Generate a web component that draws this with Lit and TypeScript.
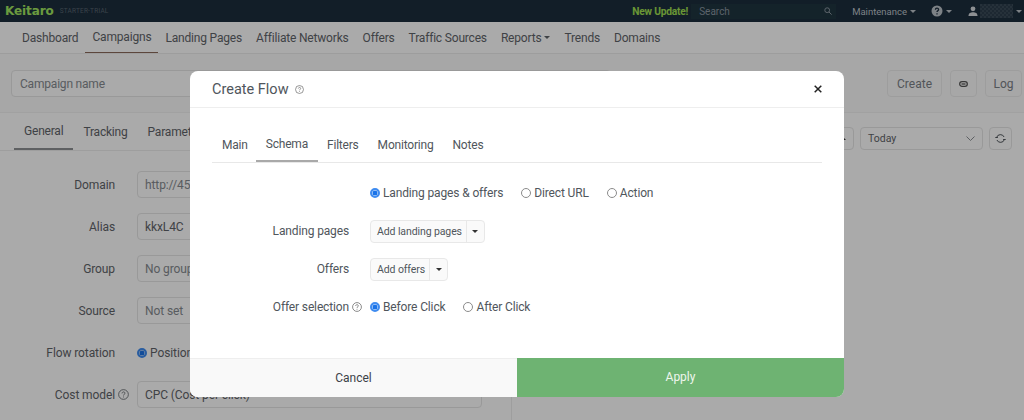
import { LitElement, html, css, svg } from "lit";
import { customElement } from "lit/decorators.js";

const helpIcon = (size = 10) => html`<svg class="help" width=${size} height=${size} viewBox="0 0 12 12" fill="none" stroke="currentColor">
  <circle cx="6" cy="6" r="5.3" stroke-width="0.9"></circle>
  <path d="M4.4 4.8c0-2.1 3.2-2.1 3.2-.2 0 1.2-1.6 1.2-1.6 2.5" stroke-width="0.9"></path>
  <path d="M6 8.2v1" stroke-width="0.9"></path>
</svg>`;

const caret = svg`<path d="M0 0h6L3 3z" fill="currentColor"></path>`;

@customElement("app-root")
export class AppRoot extends LitElement {
  static styles = css`
    :host {
      display: block;
      position: relative;
      width: 1024px;
      height: 420px;
      overflow: hidden;
      background: #fff;
      font-family: Roboto, "Liberation Sans", sans-serif;
      font-size: 12px;
      color: #5f6469;
    }
    .topbar {
      height: 22px;
      background: #1c2d3d;
      display: flex;
      align-items: center;
      padding: 0 2px 0 5px;
      color: #bcc3c9;
      font-size: 9.5px;
    }
    .logo {
      font-family: "DejaVu Sans", sans-serif;
      font-weight: 700;
      font-size: 12px;
      letter-spacing: -0.1px;
      color: #a1e75f;
    }
    .plan {
      margin-left: 6px;
      font-size: 6.5px;
      letter-spacing: 0.2px;
      color: #58656f;
    }
    .spacer {
      flex: 1;
    }
    .update {
      font-weight: 700;
      font-size: 10.2px;
      color: #a0e050;
      letter-spacing: -0.2px;
    }
    .search {
      width: 145px;
      height: 15px;
      margin-left: 3px;
      background: #1f3540;
      display: flex;
      align-items: center;
      justify-content: space-between;
      padding: 0 4px 0 8px;
      box-sizing: border-box;
      color: #8a96a0;
      font-size: 10px;
    }
    .menu {
      display: flex;
      align-items: center;
      gap: 3px;
    }
    .menu.maintenance {
      margin-left: 16px;
    }
    .menu.question {
      margin-left: 15px;
    }
    .menu.user {
      margin-left: 16px;
    }
    .blurred {
      width: 33px;
      height: 14px;
      margin-left: 2px;
      background: repeating-conic-gradient(#2c3d4c 0 25%, #3a4a58 0 50%) 0 0 / 4px 4px;
    }
    .last-caret {
      margin-left: 3px;
    }
    .nav {
      height: 31px;
      display: flex;
      padding-left: 15px;
      border-bottom: 1px solid #ececec;
      font-size: 12px;
      letter-spacing: -0.18px;
    }
    .nav a,
    .page-tabs a,
    .modal-tabs a {
      display: flex;
      align-items: center;
      gap: 3px;
      padding: 0 7px;
      white-space: nowrap;
    }
    .nav a.on {
      border-bottom: 1px solid #8a6a5a;
    }
    .toolbar {
      height: 59px;
      display: flex;
      align-items: center;
      gap: 8px;
      padding: 1px 2px 0 11px;
      border-bottom: 1px solid #f2f2f2;
      box-sizing: border-box;
      background: #fbfbfb;
    }
    .field {
      height: 27px;
      display: flex;
      align-items: center;
      border: 1px solid #e6e6e6;
      border-radius: 4px;
      padding: 0 7px;
      box-sizing: border-box;
      background: #fff;
      color: #868b90;
      white-space: nowrap;
      overflow: hidden;
    }
    .name {
      width: 600px;
      margin-right: auto;
      padding-left: 8px;
      font-size: 12px;
      letter-spacing: -0.2px;
    }
    .tool {
      height: 27px;
      padding: 0 9px;
      display: flex;
      align-items: center;
      justify-content: center;
      border: 1px solid #ececec;
      border-radius: 4px;
      box-sizing: border-box;
      color: #7a8086;
      font-size: 12px;
    }
    .tool.link {
      width: 27px;
      padding: 0;
    }
    .tool.log {
      width: 37px;
      padding: 0;
    }
    .columns {
      display: grid;
      grid-template-columns: 512px 512px;
    }
    .left {
      border-right: 1px solid #eee;
      box-sizing: border-box;
      height: 307px;
    }
    .page-tabs {
      height: 37px;
      display: flex;
      padding-left: 14px;
      border-bottom: 1px solid #eee;
      font-size: 12px;
      letter-spacing: -0.2px;
    }
    .page-tabs a {
      padding: 0 10px;
    }
    .page-tabs a.on {
      border-bottom: 2px solid #8e9094;
    }
    .form {
      display: grid;
      grid-template-columns: 115px 22px 1fr;
      row-gap: 15px;
      padding: 20px 29px 0 0;
      align-items: center;
      letter-spacing: -0.1px;
    }
    .form label {
      text-align: right;
    }
    .form .slot {
      display: flex;
      padding-left: 3px;
    }
    .form .dark {
      color: #5f6469;
    }
    .filters {
      display: flex;
      justify-content: flex-end;
      align-items: flex-start;
      gap: 6px;
      padding: 14px 12px 0 0;
    }
    .filters .today {
      width: 123px;
      height: 23px;
      justify-content: space-between;
      color: #5f6469;
      font-size: 10.5px;
    }
    .square {
      width: 23px;
      height: 23px;
      display: flex;
      align-items: center;
      justify-content: center;
      border: 1px solid #e6e6e6;
      border-radius: 4px;
      box-sizing: border-box;
      color: #333;
    }
    .radio-dot {
      width: 10px;
      height: 10px;
      border-radius: 50%;
      box-sizing: border-box;
      border: 1px solid #8b8b8b;
      background: #fff;
      flex: none;
    }
    .radio-dot.on {
      border: 2px solid #3f8cf0;
      background: #1a73e8;
      box-shadow: inset 0 0 0 0.5px #fff;
    }
    .radio {
      display: flex;
      align-items: center;
      gap: 3px;
      white-space: nowrap;
    }
    .rotation {
      height: 27px;
    }
    .scrim {
      position: absolute;
      inset: 0;
      background: rgba(0, 0, 0, 0.335);
    }
    .modal {
      position: absolute;
      left: 190px;
      top: 71px;
      width: 654px;
      height: 326px;
      background: #fff;
      border-radius: 8px;
      overflow: hidden;
      display: flex;
      flex-direction: column;
      color: #50565c;
    }
    .modal-head {
      height: 37px;
      box-sizing: border-box;
      display: flex;
      align-items: center;
      padding: 0 22px;
      border-bottom: 1px solid #eee;
      font-size: 14.5px;
    }
    .modal-head .help {
      margin-left: 6px;
      color: #666;
    }
    .close {
      margin-left: auto;
    }
    .modal-body {
      flex: 1;
      padding: 19px 22px 0;
    }
    .modal-tabs {
      height: 36px;
      display: flex;
      border-bottom: 1px solid #e8e8e8;
      font-size: 12px;
      letter-spacing: -0.2px;
      box-sizing: border-box;
    }
    .modal-tabs a {
      padding: 0 10px;
      margin-right: -1px;
    }
    .modal-tabs a.on {
      border-bottom: 2px solid #a9a9a9;
      margin-left: -1px;
    }
    .schema {
      display: grid;
      grid-template-columns: 137px 21px 1fr;
      grid-auto-rows: 38px;
      align-items: center;
      margin-top: 11px;
      font-size: 12px;
      letter-spacing: -0.14px;
    }
    .schema .lbl {
      text-align: right;
    }
    .schema .slot {
      display: flex;
      padding-left: 3px;
      color: #666;
    }
    .radios {
      display: flex;
    }
    .radios .radio:not(:last-child) {
      margin-right: 18px;
    }
    .split {
      display: inline-flex;
      height: 23px;
      border: 1px solid #e8e8e8;
      border-radius: 4px;
      background: #fafafa;
      box-sizing: border-box;
      font-size: 10.5px;
      letter-spacing: -0.1px;
      width: fit-content;
    }
    .split span {
      display: flex;
      align-items: center;
      padding: 0 4px 0 6px;
    }
    .split .arrow {
      border-left: 1px solid #e8e8e8;
      width: 17px;
      padding: 0;
      justify-content: center;
      color: #333;
    }
    .modal-foot {
      height: 39px;
      display: grid;
      grid-template-columns: 327px 327px;
      font-size: 12px;
    }
    .cancel,
    .apply {
      display: flex;
      align-items: center;
      justify-content: center;
      padding-bottom: 1px;
      box-sizing: border-box;
    }
    .cancel {
      background: #f9f9f9;
      border-top: 1px solid #eee;
      color: #3c4248;
    }
    .apply {
      background: #6eb372;
      color: #eef6ee;
    }
  `;

  render() {
    return html`
      <div class="topbar">
        <span class="logo">Keitaro</span>
        <span class="plan">STARTER-TRIAL</span>
        <span class="spacer"></span>
        <span class="update">New Update!</span>
        <div class="search">
          <span>Search</span>
          <svg width="8" height="8" viewBox="0 0 8 8" fill="none" stroke="#8a96a0">
            <circle cx="3.2" cy="3.2" r="2.4"></circle>
            <path d="M5 5l2.6 2.6"></path>
          </svg>
        </div>
        <span class="menu maintenance">Maintenance <svg width="6" height="3">${caret}</svg></span>
        <span class="menu question">
          <svg width="12" height="12" viewBox="0 0 12 12">
            <circle cx="6" cy="6" r="5.5" fill="#bcc3c9"></circle>
            <path d="M4.4 4.8c0-2.1 3.2-2.1 3.2-.2 0 1.2-1.6 1.2-1.6 2.5M6 8.2v1.2" fill="none" stroke="#1c2d3d" stroke-width="1.3"></path>
          </svg>
          <svg width="6" height="3">${caret}</svg>
        </span>
        <span class="menu user">
          <svg width="10" height="10" viewBox="0 0 10 10" fill="#d4d9dd">
            <circle cx="5" cy="2.8" r="2.4"></circle>
            <path d="M0.5 10c0-3 2-3.8 4.5-3.8S9.5 7 9.5 10z"></path>
          </svg>
        </span>
        <div class="blurred"></div>
        <span class="menu last-caret"><svg width="6" height="3">${caret}</svg></span>
      </div>

      <div class="nav">
        <a>Dashboard</a>
        <a class="on">Campaigns</a>
        <a>Landing Pages</a>
        <a>Affiliate Networks</a>
        <a>Offers</a>
        <a>Traffic Sources</a>
        <a>Reports <svg width="6" height="3">${caret}</svg></a>
        <a>Trends</a>
        <a>Domains</a>
      </div>

      <div class="toolbar">
        <div class="field name">Campaign name</div>
        <div class="tool">Create</div>
        <div class="tool link">
          <svg width="9" height="6" viewBox="0 0 9 6" fill="none" stroke="#555" stroke-width="1.3">
            <rect x="0.7" y="0.7" width="7.6" height="4.6" rx="2.3"></rect>
            <path d="M2.5 3h4"></path>
          </svg>
        </div>
        <div class="tool log">Log</div>
      </div>

      <div class="columns">
        <div class="left">
          <div class="page-tabs">
            <a class="on">General</a>
            <a>Tracking</a>
            <a>Parameters</a>
          </div>
          <div class="form">
            <label>Domain</label><span></span><div class="field">http://45.12.0.0/</div>
            <label>Alias</label><span></span><div class="field dark">kkxL4C</div>
            <label>Group</label><span></span><div class="field">No group</div>
            <label>Source</label><span></span><div class="field">Not set</div>
            <label>Flow rotation</label><span></span>
            <div class="radio dark rotation"><span class="radio-dot on"></span>Position</div>
            <label>Cost model</label><span class="slot">${helpIcon(11)}</span>
            <div class="field dark">CPC (Cost per click)</div>
          </div>
        </div>
        <div class="filters">
          <div class="square">
            <svg width="6" height="3" viewBox="0 0 6 3"><path d="M0 3h6L3 0z" fill="currentColor"></path></svg>
          </div>
          <div class="field today">
            Today
            <svg width="9" height="5" viewBox="0 0 9 5" fill="none" stroke="#8a8f94"><path d="M0.5 0.5l4 4 4-4"></path></svg>
          </div>
          <div class="square">
            <svg width="11" height="11" viewBox="0 0 11 11" fill="none" stroke="#50565c">
              <path d="M1.6 4.5a4 4 0 0 1 7.5-.5M9.400 6.500a4 4 0 0 1-7.500.5"></path>
              <path d="M0.3 4.500h2.600M8.100 6.500h2.600"></path>
            </svg>
          </div>
        </div>
      </div>

      <div class="scrim"></div>

      <div class="modal">
        <div class="modal-head">
          <span>Create Flow</span>
          ${helpIcon(9)}
          <svg class="close" width="8" height="8" viewBox="0 0 8 8" stroke="#222" stroke-width="1.5">
            <path d="M0.7 0.7l6.6 6.6M7.3 0.7L0.7 7.3"></path>
          </svg>
        </div>
        <div class="modal-body">
          <div class="modal-tabs">
            <a>Main</a>
            <a class="on">Schema</a>
            <a>Filters</a>
            <a>Monitoring</a>
            <a>Notes</a>
          </div>
          <div class="schema">
            <span></span><span></span>
            <div class="radios">
              <div class="radio"><span class="radio-dot on"></span>Landing pages &amp; offers</div>
              <div class="radio"><span class="radio-dot"></span>Direct URL</div>
              <div class="radio"><span class="radio-dot"></span>Action</div>
            </div>

            <span class="lbl">Landing pages</span><span></span>
            <div class="split">
              <span>Add landing pages</span>
              <span class="arrow"><svg width="6" height="3">${caret}</svg></span>
            </div>

            <span class="lbl">Offers</span><span></span>
            <div class="split">
              <span>Add offers</span>
              <span class="arrow"><svg width="6" height="3">${caret}</svg></span>
            </div>

            <span class="lbl">Offer selection</span>
            <span class="slot">${helpIcon(10)}</span>
            <div class="radios">
              <div class="radio"><span class="radio-dot on"></span>Before Click</div>
              <div class="radio"><span class="radio-dot"></span>After Click</div>
            </div>
          </div>
        </div>
        <div class="modal-foot">
          <div class="cancel">Cancel</div>
          <div class="apply">Apply</div>
        </div>
      </div>
    `;
  }
}
